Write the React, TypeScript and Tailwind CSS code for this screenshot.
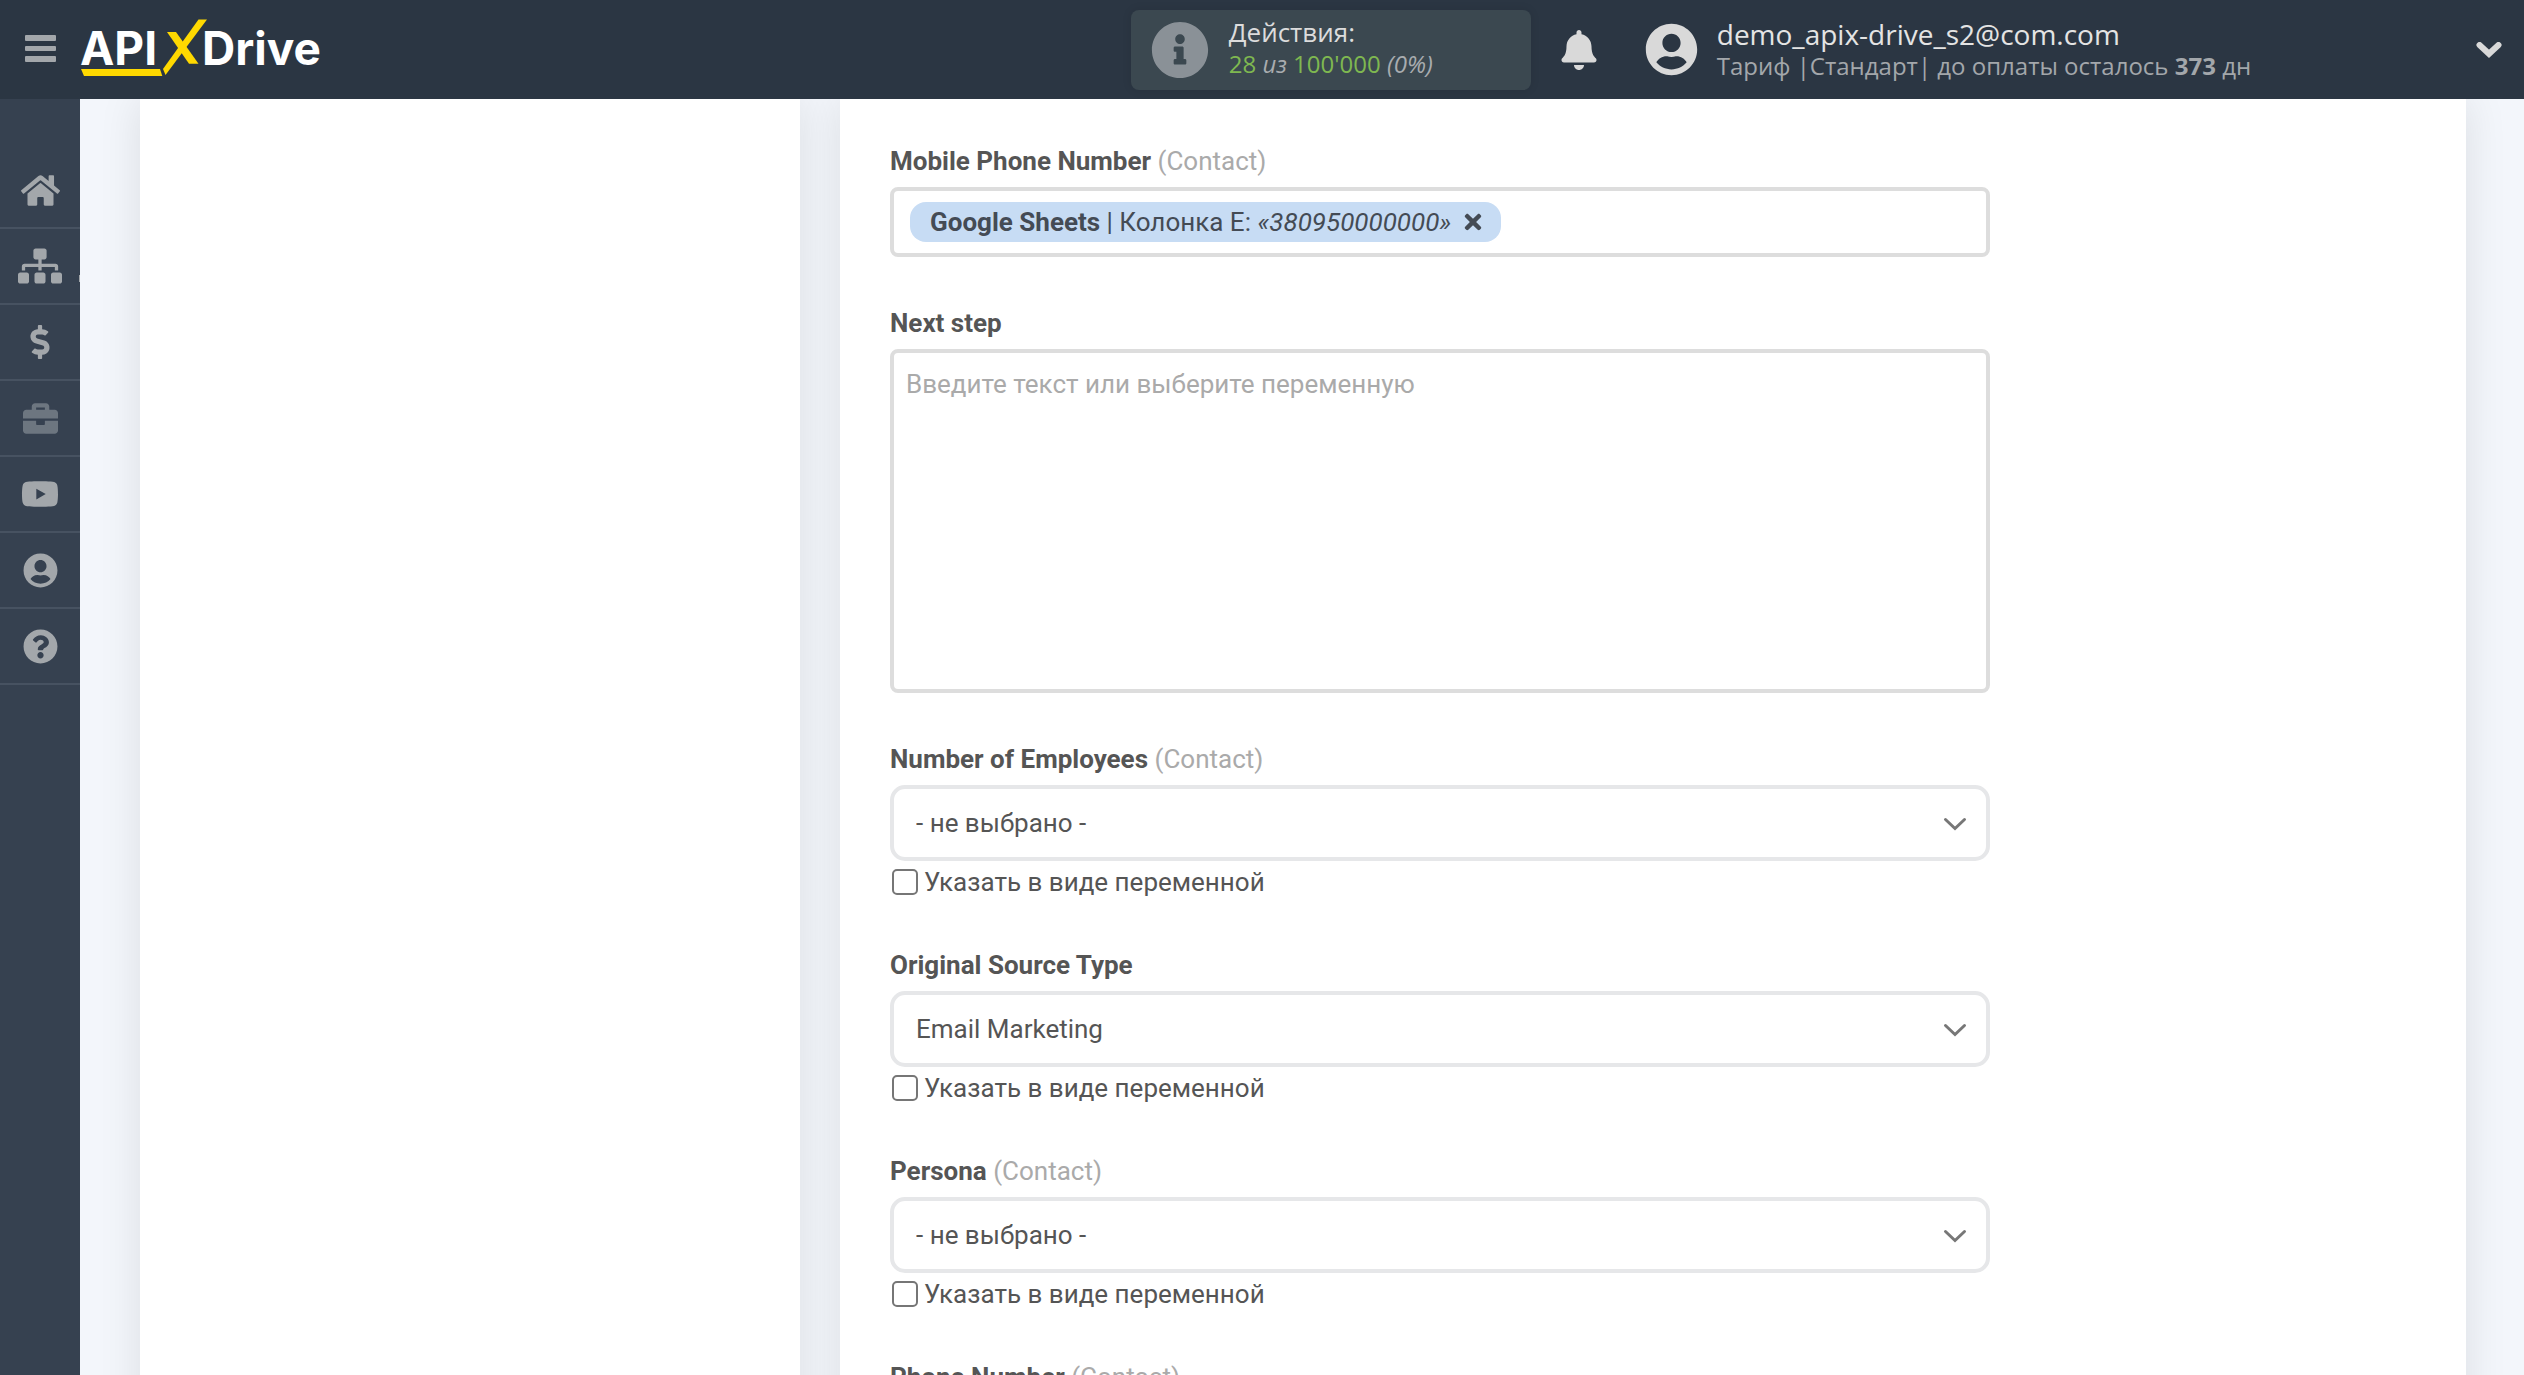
import type { ReactNode } from "react";
import {
  FaBell,
  FaBriefcase,
  FaDollarSign,
  FaHome,
  FaInfoCircle,
  FaQuestionCircle,
  FaSitemap,
  FaTimes,
  FaUserCircle,
  FaYoutube,
} from "react-icons/fa";

const NAV = [
  { label: "Главная", icon: <FaHome size={39} /> },
  { label: "Связи", icon: <FaSitemap size={44} />, caret: true },
  { label: "Тарифы", icon: <FaDollarSign size={34} /> },
  { label: "Инструменты", icon: <FaBriefcase size={35} />, dim: true },
  { label: "Видео", icon: <FaYoutube size={38} /> },
  { label: "Профиль", icon: <FaUserCircle size={35} /> },
  { label: "Помощь", icon: <FaQuestionCircle size={35} /> },
];

function Logo() {
  return (
    <a
      href="#home"
      aria-label="APIXDrive"
      className="relative ml-6 flex h-[60px] items-center font-[Inter,sans-serif] text-[46px] leading-[60px] font-bold text-white"
    >
      <span className="w-[122px]">API</span>
      <span>Drive</span>
      <svg
        className="absolute top-0 left-0 h-[60px] w-[128px]"
        viewBox="80 17 128 60"
        fill="#ffd900"
        aria-hidden="true"
      >
        <path d="M81 68H160L162.300 75H84Z" />
        <path d="M198.500 18.500H207L165.500 74L163 68Z" />
        <path d="M167 31H176L198.500 62.700H189Z" />
      </svg>
    </a>
  );
}

function Header() {
  return (
    <header className="relative z-10 flex h-[99px] shrink-0 items-center bg-[#2b3643] font-['Open_Sans',sans-serif]">
      <div className="flex w-[44.8%] items-center pb-[3px] pl-[25px]">
        <button type="button" aria-label="Меню" className="flex w-[31px] flex-col gap-[5px] text-[#a3a7ab]">
          <span className="h-[6px] w-full rounded-[1px] bg-current" />
          <span className="h-[5px] w-full rounded-[1px] bg-current" />
          <span className="h-[6px] w-full rounded-[1px] bg-current" />
        </button>
        <Logo />
      </div>
      <div className="flex h-20 w-[400px] shrink-0 items-center rounded-lg bg-[#3b4850] pl-5 shadow-[0_0_10px_rgba(0,0,0,0.1)]">
        <FaInfoCircle size={58} className="text-[#8a9197]" />
        <div className="ml-5 pb-1">
          <p className="text-[26px] leading-8 text-[#dcdcdc]">Действия:</p>
          <p className="text-[24px] leading-8 text-[#a8acaf]">
            <span className="text-[#7fb850]">28</span> <i>из</i> <span className="text-[#7fb850]">100'000</span>{" "}
            <i>(0%)</i>
          </p>
        </div>
      </div>
      <button type="button" aria-label="Уведомления" className="ml-7 text-[#d9d9d9]">
        <FaBell size={40} />
      </button>
      <button type="button" className="flex flex-1 items-center pr-[22px] pl-[46px] text-left">
        <FaUserCircle size={53} className="shrink-0 text-[#d9d9d9]" />
        <span className="ml-[19px] flex-1">
          <span className="block text-[28px] leading-8 text-[#e4e4e4]">demo_apix-drive_s2@com.com</span>
          <span className="block text-[24px] leading-8 text-[#a3a7ab]">
            Тариф |Стандарт| до оплаты осталось <b>373</b> дн
          </span>
        </span>
        <svg
          className="h-4 w-[26px] text-[#d9d9d9]"
          viewBox="0 0 26 16"
          fill="none"
          stroke="currentColor"
          strokeWidth="6"
          strokeLinecap="round"
          aria-hidden="true"
        >
          <path d="M3.500 3L13 11.800L22.500 3" />
        </svg>
      </button>
    </header>
  );
}

function Sidebar() {
  return (
    <nav className="w-20 shrink-0 bg-[#364150] pt-[54px]">
      {NAV.map((item) => (
        <a
          key={item.label}
          href="#nav"
          aria-label={item.label}
          className={
            "relative flex h-[76px] items-center justify-center border-b-2 border-[#475261] " +
            (item.dim ? "text-[#6d7680]" : "text-[#a3a7ab]")
          }
        >
          {item.icon}
          {item.caret && <span className="absolute right-0 bottom-[21px] h-[7px] w-px bg-[#a3a7ab]" />}
        </a>
      ))}
    </nav>
  );
}

function FieldLabel({ id, name, scope }: { id: string; name: string; scope?: string }) {
  return (
    <label htmlFor={id} className="mb-2 block leading-9">
      <b>{name}</b>
      {scope && <span className="text-[#aaaaaa]"> ({scope})</span>}
    </label>
  );
}

function TokenField({ id, name, scope, children }: { id: string; name: string; scope?: string; children?: ReactNode }) {
  return (
    <div className="mb-12">
      <FieldLabel id={id} name={name} scope={scope} />
      <div className="flex h-[70px] items-center rounded-lg border-4 border-[#dddddd] bg-white px-4">
        {children}
        <input id={id} type="text" className="min-w-0 flex-1 outline-none" />
      </div>
    </div>
  );
}

function SelectField({ id, name, scope, value }: { id: string; name: string; scope?: string; value: string }) {
  return (
    <div className="mb-12">
      <FieldLabel id={id} name={name} scope={scope} />
      <div className="relative">
        <select
          id={id}
          className="block h-[76px] w-full appearance-none rounded-[15px] border-4 border-[#e6e7e9] bg-white px-[22px] text-[#555555]"
        >
          <option>{value}</option>
        </select>
        <svg
          className="pointer-events-none absolute top-[32px] right-[23px] h-[14px] w-[24px]"
          viewBox="0 0 24 14"
          fill="none"
          stroke="#777777"
          strokeWidth="3"
          strokeLinecap="round"
          aria-hidden="true"
        >
          <path d="M2.500 2.500L12 11.500L21.500 2.500" />
        </svg>
      </div>
      <label className="flex h-[38px] items-center gap-[6px] pt-1 pl-[2px]">
        <input
          type="checkbox"
          className="size-[26px] appearance-none rounded-[5px] border-2 border-[#767676] bg-white checked:bg-[#767676]"
        />
        Указать в виде переменной
      </label>
    </div>
  );
}

export default function App() {
  return (
    <div className="flex h-screen flex-col overflow-hidden bg-[#f3f6fb] font-[Roboto,sans-serif] text-[26px] text-[#555555]">
      <Header />
      <div className="flex min-h-0 flex-1">
        <Sidebar />
        <main className="grid min-w-0 flex-1 grid-cols-[330fr_813fr] gap-10 overflow-hidden pr-[58px] pl-[60px]">
          <aside className="bg-white shadow-[0_0_40px_rgba(0,0,0,0.1)]" />
          <section className="bg-white px-[50px] pt-11 shadow-[0_0_40px_rgba(0,0,0,0.1)]">
            <form className="max-w-[1100px]">
              <TokenField id="mobile" name="Mobile Phone Number" scope="Contact">
                <span className="flex h-10 items-center rounded-[16px] bg-[#c7dcf4] pr-4 pl-5 whitespace-pre text-[#444b55]">
                  <b>Google Sheets</b> | Колонка E: <i>«380950000000»</i>
                  <button type="button" aria-label="Удалить" className="ml-[10px]">
                    <FaTimes size={24} />
                  </button>
                </span>
              </TokenField>
              <div className="mb-12">
                <FieldLabel id="next-step" name="Next step" />
                <textarea
                  id="next-step"
                  placeholder="Введите текст или выберите переменную"
                  className="block h-[344px] w-full resize-none rounded-lg border-4 border-[#dddddd] bg-white px-3 py-[13px] leading-9 placeholder:text-[#aaaaaa]"
                />
              </div>
              <SelectField id="employees" name="Number of Employees" scope="Contact" value="- не выбрано -" />
              <SelectField id="source" name="Original Source Type" value="Email Marketing" />
              <SelectField id="persona" name="Persona" scope="Contact" value="- не выбрано -" />
              <TokenField id="phone" name="Phone Number" scope="Contact" />
            </form>
          </section>
        </main>
      </div>
    </div>
  );
}
